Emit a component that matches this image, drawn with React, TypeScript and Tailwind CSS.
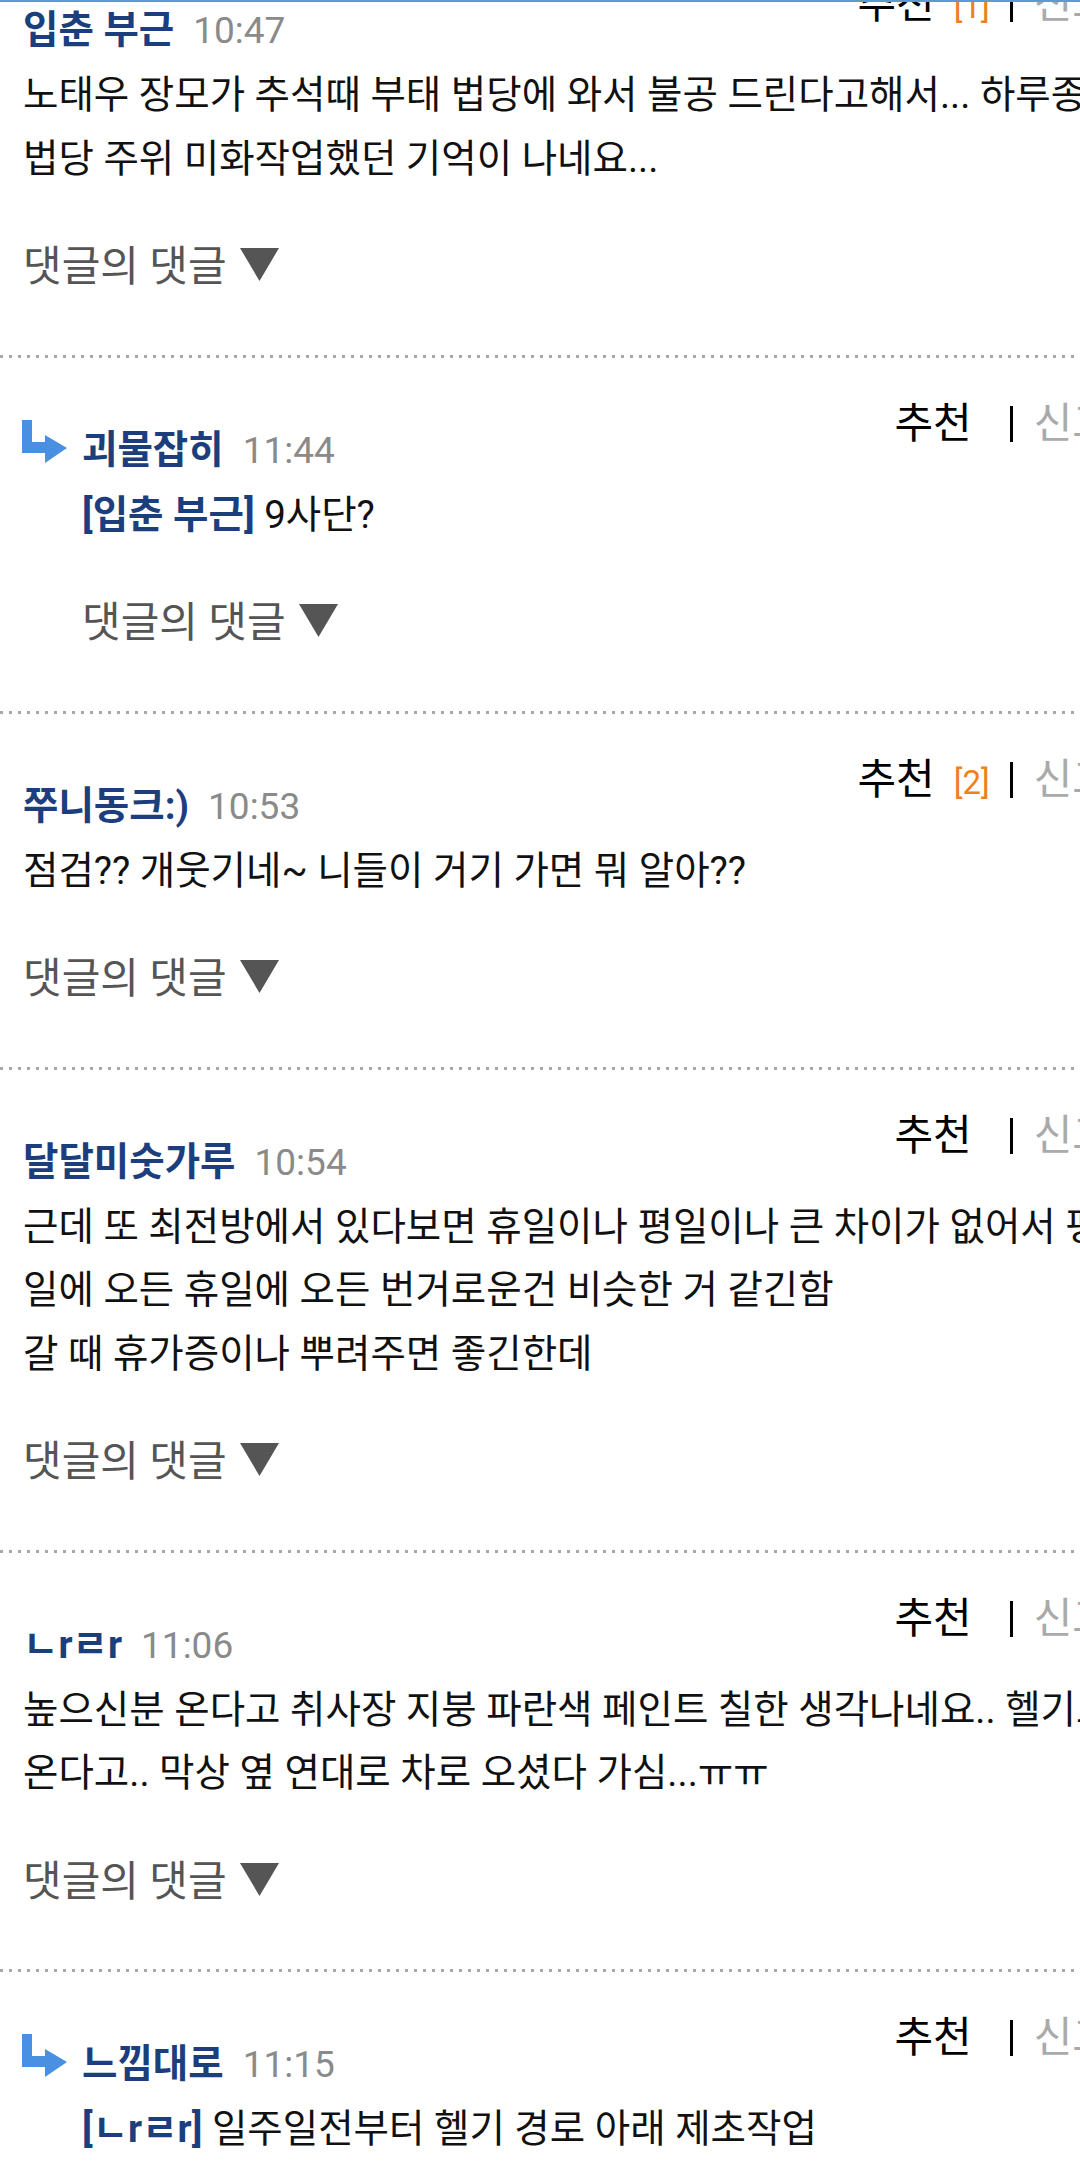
import type { ReactNode } from 'react';

interface CommentProps {
  name: string;
  time: string;
  count?: number;
  reply?: boolean;
  lines: ReactNode[];
  first?: boolean;
}

function ReplyArrow() {
  return (
    <svg width="46" height="43" viewBox="0 0 46 43" className="-mt-[11px] mr-[14px] shrink-0">
      <path d="M0 0H10V22H23V15L45 28L23 43V33H0Z" fill="#4a90e2" />
    </svg>
  );
}

function Dots() {
  return <div className="h-[3px] bg-[image:repeating-linear-gradient(to_right,#a8a8a8_0_3px,transparent_3px_9px)]" />;
}

function Comment({ name, time, count, reply, lines, first }: CommentProps) {
  const pad = reply ? 'pl-[82px]' : 'pl-[23px]';
  return (
    <div className={first ? '-mt-[65px]' : ''}>
      <Dots />
      <div className="flex items-start justify-between">
        <div className={`mt-[72px] flex items-baseline ${reply ? 'pl-[22px]' : 'pl-[23px]'}`}>
          {reply && <ReplyArrow />}
          <span className="text-[38.5px] leading-[40px] font-bold text-[#1d3e7d]">{name}</span>
          <span className="ml-[19px] text-[37px] leading-[40px] text-[#8a8a8a]">{time}</span>
        </div>
        <div className="mt-[46px] mr-[9px] flex items-baseline">
          <span className="text-[42px] leading-[40px] text-black">추천</span>
          {count ? (
            <span className="ml-[19px] text-[33px] leading-[40px] text-[#ee801f]">[{count}]</span>
          ) : null}
          <span
            className={`${count ? 'ml-[20px]' : 'ml-[38px]'} border-l-[3px] border-black pl-[21px] text-[42px] leading-[36px] text-[#aaaaaa]`}
          >
            신고
          </span>
        </div>
      </div>
      <div className={`mt-[12px] ${pad}`}>
        {lines.map((line, i) => (
          <div key={i} className="whitespace-nowrap text-[38.5px] leading-[63.5px] text-[#111]">
            {line}
          </div>
        ))}
      </div>
      <div className={`mt-[55px] pb-[65.5px] flex items-baseline ${pad}`}>
        <span className="text-[42px] leading-[44px] text-[#555]">댓글의 댓글</span>
        <svg width="39" height="33" viewBox="0 0 39 33" className="ml-[13px]">
          <polygon points="0,0 39,0 19.5,33" fill="#555" />
        </svg>
      </div>
    </div>
  );
}

function Quote({ children }: { children: ReactNode }) {
  return <span className="font-bold text-[#1d3e7d]">{children}</span>;
}

export default function App() {
  return (
    <div className="relative w-[1080px] h-[2178px] overflow-hidden bg-white font-[family-name:Roboto,Noto_Sans_CJK_KR,sans-serif]">
      <div className="w-[1120px]">
        <Comment
          first
          name="입춘 부근"
          time="10:47"
          count={1}
          lines={[
            '노태우 장모가 추석때 부태 법당에 와서 불공 드린다고해서... 하루종일',
            '법당 주위 미화작업했던 기억이 나네요...',
          ]}
        />
        <Comment
          reply
          name="괴물잡히"
          time="11:44"
          lines={[
            <>
              <Quote>[입춘 부근]</Quote> 9사단?
            </>,
          ]}
        />
        <Comment
          name="쭈니동크:)"
          time="10:53"
          count={2}
          lines={['점검?? 개웃기네~ 니들이 거기 가면 뭐 알아??']}
        />
        <Comment
          name="달달미숫가루"
          time="10:54"
          lines={[
            '근데 또 최전방에서 있다보면 휴일이나 평일이나 큰 차이가 없어서 평',
            '일에 오든 휴일에 오든 번거로운건 비슷한 거 같긴함',
            '갈 때 휴가증이나 뿌려주면 좋긴한데',
          ]}
        />
        <Comment
          name="ㄴrㄹr"
          time="11:06"
          lines={[
            '높으신분 온다고 취사장 지붕 파란색 페인트 칠한 생각나네요.. 헬기로',
            '온다고.. 막상 옆 연대로 차로 오셨다 가심...ㅠㅠ',
          ]}
        />
        <Comment
          reply
          name="느낌대로"
          time="11:15"
          lines={[
            <>
              <Quote>[ㄴrㄹr]</Quote> 일주일전부터 헬기 경로 아래 제초작업
            </>,
          ]}
        />
      </div>
      <div className="absolute left-0 top-0 h-[2px] w-full bg-[#5b9bd5]" />
    </div>
  );
}
